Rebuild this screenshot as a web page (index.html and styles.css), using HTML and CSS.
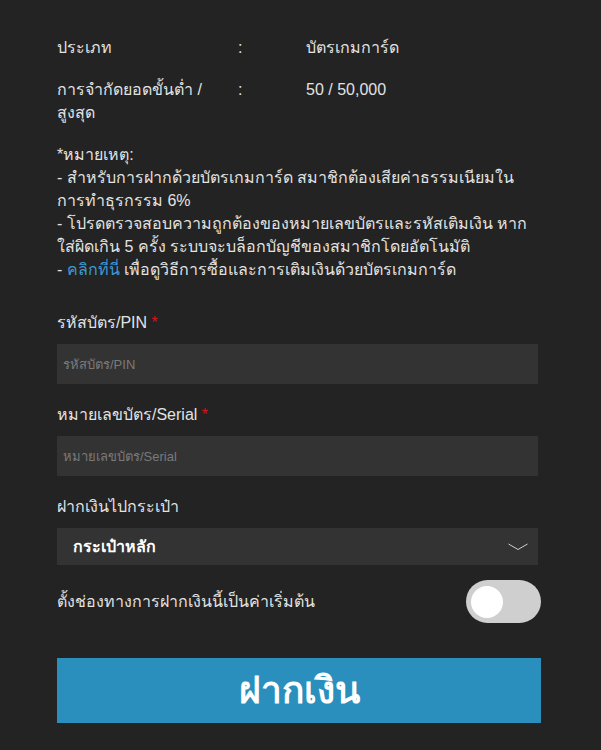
FILE: index.html
```html
<!DOCTYPE html>
<html lang="th">
<head>
  <meta charset="UTF-8" />
  <meta name="viewport" content="width=device-width, initial-scale=1.0" />
  <title>ฝากเงิน</title>
  <link rel="stylesheet" href="styles.css">
</head>
<body>
  <main class="panel">
    <div class="info-row">
      <span class="info-label">ประเภท</span>
      <span class="info-colon">:</span>
      <span class="info-value">บัตรเกมการ์ด</span>
    </div>
    <div class="info-row">
      <span class="info-label">การจำกัดยอดขั้นต่ำ / สูงสุด</span>
      <span class="info-colon">:</span>
      <span class="info-value">50 / 50,000</span>
    </div>

    <div class="note">
      *หมายเหตุ:<br>
      - สำหรับการฝากด้วยบัตรเกมการ์ด สมาชิกต้องเสียค่าธรรมเนียมในการทำธุรกรรม 6%<br>
      - โปรดตรวจสอบความถูกต้องของหมายเลขบัตรและรหัสเติมเงิน หากใส่ผิดเกิน 5 ครั้ง ระบบจะบล็อกบัญชีของสมาชิกโดยอัตโนมัติ<br>
      - <a href="#">คลิกที่นี่</a> เพื่อดูวิธีการซื้อและการเติมเงินด้วยบัตรเกมการ์ด
    </div>

    <label class="field-label">รหัสบัตร/PIN <span class="req">*</span></label>
    <input class="field-input" type="text" placeholder="รหัสบัตร/PIN">

    <label class="field-label">หมายเลขบัตร/Serial <span class="req">*</span></label>
    <input class="field-input" type="text" placeholder="หมายเลขบัตร/Serial">

    <label class="field-label">ฝากเงินไปกระเป๋า</label>
    <div class="select">
      <span>กระเป๋าหลัก</span>
      <svg class="chevron" width="20" height="8" viewBox="0 0 20 8">
        <polyline points="0.5,1 10,6.5 19.5,1" fill="none" stroke="#cfcfcf" stroke-width="1"/>
      </svg>
    </div>

    <div class="toggle-row">
      <span>ตั้งช่องทางการฝากเงินนี้เป็นค่าเริ่มต้น</span>
      <span class="toggle"><span class="knob"></span></span>
    </div>

    <button class="submit">ฝากเงิน</button>
  </main>
</body>
</html>
```

FILE: styles.css
```css
body {
  margin: 0;
  background-color: #232323;
  color: #e2e2e2;
  font-family: Tahoma, "Liberation Sans", "Noto Sans", sans-serif;
  font-size: 16px;
}
.panel {
  padding: 36px 60px 27px 57px;
}
.info-row {
  display: grid;
  grid-template-columns: 181px 68px 1fr;
  line-height: 23px;
  margin-bottom: 19px;
}
.info-label {
  padding-right: 10px;
}
.note {
  line-height: 23px;
  margin-top: 10px;
  margin-bottom: 30px;
}
.note a {
  color: #3b9ad6;
  text-decoration: none;
}
.field-label {
  display: block;
  line-height: 23px;
  margin-bottom: 10px;
}
.req {
  color: #d4141e;
}
.field-input {
  display: block;
  box-sizing: border-box;
  width: 481px;
  height: 40px;
  margin: 0 0 19px;
  padding: 0 6px;
  border: none;
  background: #333333;
  color: #e2e2e2;
  font-family: inherit;
  font-size: 13px;
  outline: none;
}
.field-input::placeholder {
  color: #7a7a7a;
}
.select {
  box-sizing: border-box;
  width: 481px;
  height: 37px;
  background: #333333;
  display: flex;
  align-items: center;
  justify-content: space-between;
  padding: 0 10px 0 16px;
  font-weight: bold;
  color: #ffffff;
}
.toggle-row {
  display: flex;
  align-items: center;
  justify-content: space-between;
  margin-top: 15px;
}
.toggle {
  width: 75px;
  height: 43px;
  border-radius: 22px;
  background: #cfcfcf;
  display: flex;
  align-items: center;
  padding-left: 5px;
  box-sizing: border-box;
}
.knob {
  width: 32px;
  height: 32px;
  border-radius: 50%;
  background: #ffffff;
}
.submit {
  display: block;
  width: 484px;
  height: 65px;
  margin-top: 35px;
  padding: 0;
  border: none;
  background: #2b8fbe;
  color: #ffffff;
  font-family: inherit;
  font-size: 37px;
  font-weight: bold;
  line-height: 65px;
  cursor: pointer;
}
```
